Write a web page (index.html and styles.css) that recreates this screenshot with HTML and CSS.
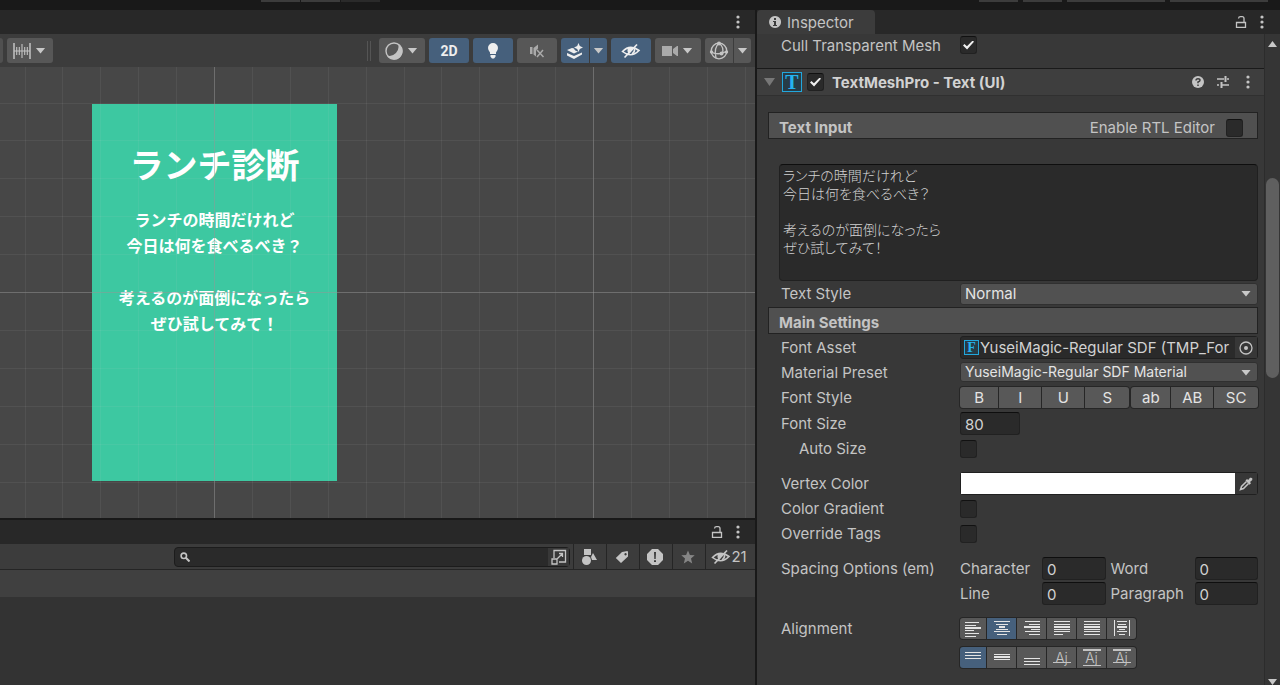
FILE: index.html
```html
<!DOCTYPE html>
<html lang="ja">
<head>
  <meta charset="UTF-8">
  <meta name="viewport" content="width=device-width, initial-scale=1.0">
  <title>Unity Editor</title>
  <link rel="stylesheet" href="styles.css">
</head>
<body>
  <!-- Shared icons -->
  <svg class="icon-defs" aria-hidden="true">
    <symbol id="icon-dots" viewBox="0 0 4 14">
      <circle cx="2" cy="2" r="1.6"/><circle cx="2" cy="7" r="1.6"/><circle cx="2" cy="12" r="1.6"/>
    </symbol>
    <symbol id="icon-lock" viewBox="0 0 12 14">
      <path d="M1.5 7.5h9v4.8h-9zM9 7V3.5Q9 1.700 7.200 1.700H5.500Q3.700 1.700 3.500 3.500" fill="none" stroke="currentColor" stroke-width="1.3"/>
    </symbol>
    <symbol id="icon-hidden" viewBox="0 0 20 16">
      <path d="M1.500 8.500Q9 .8 18 7.500Q10 15.500 1.500 8.500z" fill="none" stroke="currentColor" stroke-width="1.600"/>
      <path d="M7 5Q5.500 8.500 8 11l5-6Q10 3.500 7 5z"/>
      <path d="M13.500 6Q14 9 11 11" fill="none" stroke="currentColor" stroke-width="1.500"/>
      <path d="M3.500 14.500 16 1.500" stroke="currentColor" stroke-width="1.700"/>
    </symbol>
  </svg>

  <header class="app-bar">
    <div class="app-group">
      <span class="app-piece"></span><span class="app-piece"></span><span class="app-piece dim"></span>
    </div>
    <div class="app-group right">
      <span class="app-piece"></span><span class="app-piece"></span><span class="app-piece wide"></span><span class="app-piece wide"></span>
    </div>
  </header>

  <div class="workspace">
    <main class="left-column">
      <section class="scene-panel">
        <div class="tab-bar">
          <button class="icon-button" aria-label="Scene menu"><svg class="dots"><use href="#icon-dots"/></svg></button>
        </div>
        <div class="scene-toolbar">
          <span class="tool-stub"></span>
          <button class="tool snap" aria-label="Grid snapping">
            <svg width="18" height="18" viewBox="0 0 18 18" fill="none" stroke="currentColor"><path d="M1 1v16M17 1v16" stroke-width="1.500"/><path d="M1 9h16M3.700 5v8M6.300 5v8M9 2v14M11.700 5v8M14.300 5v8" stroke-width="1.100"/></svg>
            <span class="arrow"></span>
          </button>
          <span class="handle"></span>
          <button class="tool shading" aria-label="Draw mode">
            <svg width="18" height="18" viewBox="0 0 18 18"><circle cx="9" cy="9" r="8" fill="none" stroke="currentColor" stroke-width="1.400"/><path d="M13 2A9 9 0 0 1 2 13.500A8.300 8.300 0 1 0 13 2z"/></svg>
            <span class="arrow"></span>
          </button>
          <button class="tool on two-d">2D</button>
          <button class="tool on" aria-label="Lighting">
            <svg width="12" height="18" viewBox="0 0 12 18"><path d="M6 1a5 5 0 0 1 5 5q0 2.200-2 4.500V12H3v-1.500Q1 8.200 1 6a5 5 0 0 1 5-5zM3.500 13h5v1.700L7 16.500H5l-1.500-1.800z"/></svg>
          </button>
          <button class="tool muted" aria-label="Audio">
            <svg width="16" height="14" viewBox="0 0 16 14"><path d="M1 3h2.500v7H1zM4.500 4 9 .5v4L7 6.500v6l-2.500-2z"/><path d="M8 6l6.500 7M14 6l-6 7" fill="none" stroke="currentColor" stroke-width="1.500"/></svg>
          </button>
          <div class="tool-pair">
            <button class="tool on effects" aria-label="Effects">
              <svg width="18" height="18" viewBox="0 0 18 18"><path d="M1 8l5-2 2 .6Q8.500 9 12 9.500L8 11.500zM1 11l7 3 8-3.500v2L8 17l-7-3.500z"/><path d="M12.500 1l1.300 3 3.200 1.500-3.200 1.400-1.300 3-1.300-3L8 5.500 11.200 4z"/></svg>
            </button>
            <button class="tool on slim" aria-label="Effects options"><span class="arrow"></span></button>
          </div>
          <button class="tool on" aria-label="Scene visibility"><svg width="20" height="16"><use href="#icon-hidden"/></svg></button>
          <button class="tool camera muted" aria-label="Camera">
            <svg width="16" height="12" viewBox="0 0 16 12"><path d="M0 1h10v10H0zM11 4l4-3h1v10h-1l-4-3z"/></svg>
            <span class="arrow"></span>
          </button>
          <div class="tool-pair">
            <button class="tool gizmo" aria-label="Gizmos">
              <svg width="20" height="20" viewBox="0 0 20 20" fill="none" stroke="currentColor" stroke-width="1.300"><circle cx="10" cy="10" r="7.800"/><path d="M10 2Q4.500 7 7 17M10 2q6 5 3 11M2 11q8 4 16-1"/><g fill="currentColor" stroke="none"><circle cx="10" cy="2.500" r="2"/><circle cx="2.500" cy="11" r="1.700"/><circle cx="17.500" cy="11" r="1.700"/><circle cx="12.500" cy="12.500" r="2"/></g></svg>
            </button>
            <button class="tool slim" aria-label="Gizmo options"><span class="arrow"></span></button>
          </div>
        </div>

        <div class="scene-view">
          <div class="canvas-card">
            <h1 class="card-title">ランチ診断</h1>
            <p class="card-text">ランチの時間だけれど<br>今日は何を食べるべき？<br><br>考えるのが面倒になったら<br>ぜひ試してみて！</p>
          </div>
          <svg class="scene-grid" aria-hidden="true">
            <pattern id="grid" x="214" y="225" width="379" height="379" patternUnits="userSpaceOnUse">
              <path class="minor" d="M38 0v379M76 0v379M114 0v379M152 0v379M190 0v379M227 0v379M265 0v379M303 0v379M341 0v379M0 38h379M0 76h379M0 114h379M0 152h379M0 190h379M0 227h379M0 265h379M0 303h379M0 341h379" transform="translate(.5 .5)"/>
              <path class="major" d="M.5 0v379M0 .5h379"/>
            </pattern>
            <rect width="100%" height="100%" fill="url(#grid)"/>
          </svg>
        </div>
      </section>

      <section class="project-panel">
        <div class="tab-bar">
          <button class="icon-button" aria-label="Lock project"><svg class="lock"><use href="#icon-lock"/></svg></button>
          <button class="icon-button" aria-label="Project menu"><svg class="dots"><use href="#icon-dots"/></svg></button>
        </div>
        <div class="project-toolbar">
          <div class="search-box">
            <svg width="10" height="10" viewBox="0 0 10 10" fill="none" stroke="currentColor" stroke-width="1.600"><circle cx="3.800" cy="3.800" r="2.700"/><path d="M5.800 5.800 9.500 9.500" stroke-width="2"/></svg>
            <input class="search-input" type="text" aria-label="Search assets">
            <button class="search-open" aria-label="Open in search">
              <svg width="16" height="16" viewBox="0 0 16 16" fill="none" stroke="currentColor" stroke-width="1.300"><path d="M3 9V1.500h11.500V13H8M1 10h5v5H1zM6.500 9.500l5-5M8 4.500h3.500V8"/></svg>
            </button>
          </div>
          <button class="project-tool" aria-label="Search by type">
            <svg width="16" height="18" viewBox="0 0 16 18"><path d="M3 1h7v6H3zM12 5l4 7h-5l-1-3z"/><circle cx="5.500" cy="12.500" r="4.500"/></svg>
          </button>
          <button class="project-tool" aria-label="Search by label">
            <svg width="14" height="14" viewBox="0 0 14 14"><path fill-rule="evenodd" d="M7 2l5.500-1 .5 1v4.500L6 13 .8 8zM10.500 3a1.200 1.200 0 1 0 .1 0z"/></svg>
          </button>
          <button class="project-tool" aria-label="Search by log type">
            <svg width="18" height="18" viewBox="0 0 18 18"><path fill-rule="evenodd" d="M6 1h6l5 5v6l-5 5H6l-5-5V6zM8 4l.3 7h1.400L10 4zM8 12.200v1.800h2v-1.800z"/></svg>
          </button>
          <button class="project-tool faded" aria-label="Save search">
            <svg width="14" height="14" viewBox="0 0 14 14"><path d="M7 .5l1.900 4.400 4.800.4L10 8.500l1.200 4.900L7 10.800l-4.200 2.600L4 8.500.3 5.300l4.800-.4z"/></svg>
          </button>
          <button class="project-tool hidden-count">
            <svg width="20" height="16"><use href="#icon-hidden"/></svg>21
          </button>
        </div>
        <div class="project-path"></div>
      </section>
    </main>

    <aside class="inspector">
      <div class="tab-bar">
        <h2 class="tab">
          <svg width="12" height="12" viewBox="0 0 12 12"><path fill-rule="evenodd" d="M6 0a6 6 0 1 0 .1 0zM5 2v2h2V2zM4 5v1h1v3H4v1h4V9H7V5z"/></svg>
          Inspector
        </h2>
        <button class="icon-button" aria-label="Lock inspector"><svg class="lock"><use href="#icon-lock"/></svg></button>
        <button class="icon-button" aria-label="Inspector menu"><svg class="dots"><use href="#icon-dots"/></svg></button>
      </div>

      <div class="inspector-body">
        <form class="inspector-content">
          <div class="row cull-row">
            <label for="cull">Cull Transparent Mesh</label>
            <input type="checkbox" id="cull" class="check" checked>
          </div>

          <div class="component-header">
            <span class="foldout"></span>
            <span class="type-icon">T</span>
            <input type="checkbox" id="component" class="check" checked>
            <label for="component" class="component-name">TextMeshPro - Text (UI)</label>
            <button type="button" class="icon-button" aria-label="Help">
              <svg width="12" height="12" viewBox="0 0 12 12"><circle cx="6" cy="6" r="6"/><path d="M4 4.500Q4 2.700 6 2.700t2 1.600Q8 5.500 6 6v1.300M6 8.500V10" fill="none" stroke="#3e3e3e" stroke-width="1.500"/></svg>
            </button>
            <button type="button" class="icon-button" aria-label="Presets">
              <svg width="12" height="12" viewBox="0 0 12 12" fill="none" stroke="currentColor"><path d="M0 3h7M10 3h2M0 9h2M5 9h7" stroke-width="1.400"/><path d="M8.500 0v6M4.500 6v6" stroke-width="2"/></svg>
            </button>
            <button type="button" class="icon-button" aria-label="Component menu"><svg class="dots"><use href="#icon-dots"/></svg></button>
          </div>

          <div class="section-bar first">
            <label for="text-input" class="section-name">Text Input</label>
            <label for="rtl">Enable RTL Editor</label>
            <input type="checkbox" id="rtl" class="check">
          </div>
          <textarea id="text-input" class="text-input" spellcheck="false">ランチの時間だけれど
今日は何を食べるべき？

考えるのが面倒になったら
ぜひ試してみて！</textarea>
          <div class="row">
            <label for="text-style">Text Style</label>
            <div class="select-wrap">
              <select id="text-style"><option>Normal</option></select>
              <span class="arrow"></span>
            </div>
          </div>

          <div class="section-bar">
            <h3 class="section-name">Main Settings</h3>
          </div>
          <div class="group font-group">
            <div class="row">
              <label for="font-asset">Font Asset</label>
              <div class="object-field">
                <span class="asset-icon">F</span>
                <input type="text" id="font-asset" value="YuseiMagic-Regular SDF (TMP_For" readonly>
                <button type="button" class="picker" aria-label="Select font asset">
                  <svg width="14" height="14" viewBox="0 0 14 14"><circle cx="7" cy="7" r="6" fill="none" stroke="currentColor" stroke-width="1.300"/><circle cx="7" cy="7" r="2"/></svg>
                </button>
              </div>
            </div>
            <div class="row">
              <label for="material">Material Preset</label>
              <div class="select-wrap small">
                <select id="material"><option>YuseiMagic-Regular SDF Material</option></select>
                <span class="arrow"></span>
              </div>
            </div>
            <div class="row">
              <span>Font Style</span>
              <div class="style-buttons">
                <div class="button-strip four">
                  <button type="button">B</button><button type="button">I</button><button type="button">U</button><button type="button">S</button>
                </div>
                <div class="button-strip three">
                  <button type="button">ab</button><button type="button">AB</button><button type="button">SC</button>
                </div>
              </div>
            </div>
          </div>
          <div class="group size-group">
            <div class="row">
              <label for="font-size">Font Size</label>
              <input type="text" id="font-size" class="field size-field" value="80">
            </div>
            <div class="row">
              <label for="auto-size" class="indent">Auto Size</label>
              <input type="checkbox" id="auto-size" class="check">
            </div>
          </div>
          <div class="group">
            <div class="row">
              <label for="vertex-color">Vertex Color</label>
              <div class="color-field">
                <input type="color" id="vertex-color" value="#ffffff">
                <button type="button" class="picker" aria-label="Pick color">
                  <svg width="14" height="14" viewBox="0 0 14 14"><path d="M6.500 3.500 8 2l1.200 1L11 .8Q14 0 13.300 3L11 5l1 1.200-1.500 1.500z"/><path d="M7.500 4.500 2.500 9.500 1.500 12.500l3-1 5-5" fill="none" stroke="currentColor" stroke-width="1.500"/></svg>
                </button>
              </div>
            </div>
            <div class="row">
              <label for="gradient">Color Gradient</label>
              <input type="checkbox" id="gradient" class="check">
            </div>
            <div class="row">
              <label for="override">Override Tags</label>
              <input type="checkbox" id="override" class="check">
            </div>
          </div>
          <div class="group">
            <div class="row">
              <span>Spacing Options (em)</span>
              <div class="spacing-fields">
                <label for="character">Character</label><input type="text" id="character" class="field" value="0">
                <label for="word">Word</label><input type="text" id="word" class="field" value="0">
              </div>
            </div>
            <div class="row">
              <span></span>
              <div class="spacing-fields">
                <label for="line">Line</label><input type="text" id="line" class="field" value="0">
                <label for="paragraph">Paragraph</label><input type="text" id="paragraph" class="field" value="0">
              </div>
            </div>
          </div>
          <div class="group align-group">
            <div class="row">
              <span>Alignment</span>
              <div class="button-strip align">
                <button type="button" aria-label="Left"><svg class="align-icon"><path d="M0 2.500h14M0 5.500h11M0 10.500h9M0 13.500h14M0 16.500h11"/><path class="thick" d="M0 8h16"/></svg></button>
                <button type="button" class="on" aria-label="Center"><svg class="align-icon"><path d="M0 1.500h16M2 4.500h12M2 9.500h12M0 11.500h16M3 14.500h10"/><path class="thick" d="M5 7h6"/></svg></button>
                <button type="button" aria-label="Right"><svg class="align-icon"><path d="M1 1.500h15M5 4.500h11M7 9.500h9M1 11.500h15M5 14.500h11"/><path class="thick" d="M0 7h16"/></svg></button>
                <button type="button" aria-label="Justified"><svg class="align-icon"><path d="M0 1.500h16M0 4.500h16M0 9.500h16M0 11.500h16M0 14.500h9"/><path class="thick" d="M0 7h16"/></svg></button>
                <button type="button" aria-label="Flush"><svg class="align-icon"><path d="M0 1.500h16M0 4.500h16M0 9.500h16M0 11.500h16M0 14.500h16"/><path class="thick" d="M0 7h16"/></svg></button>
                <button type="button" aria-label="Geometry center"><svg class="align-icon"><path d="M.5 0v16M15.500 0v16M3 1.500h10M4 4.500h8M5 9.500h6M3 11.500h10M5 14.500h6"/><path class="thick" d="M3 7h10"/></svg></button>
              </div>
            </div>
            <div class="row">
              <span></span>
              <div class="button-strip align">
                <button type="button" class="on" aria-label="Top"><svg class="align-icon"><path d="M0 3.500h16M0 6.500h16M0 9.500h16"/></svg></button>
                <button type="button" aria-label="Middle"><svg class="align-icon"><path d="M0 5.500h16M0 10.500h16"/><path class="thick" d="M0 8h16"/></svg></button>
                <button type="button" aria-label="Bottom"><svg class="align-icon"><path d="M0 9.500h16M0 12.500h16M0 15.500h16"/></svg></button>
                <button type="button" class="glyph baseline" aria-label="Baseline">Aj</button>
                <button type="button" class="glyph midline" aria-label="Midline">Aj</button>
                <button type="button" class="glyph capline" aria-label="Capline">Aj</button>
              </div>
            </div>
          </div>
        </form>
        <div class="scrollbar">
          <span class="scroll-up"></span>
          <span class="scroll-track"><span class="scroll-thumb"></span></span>
          <span class="scroll-down"></span>
        </div>
      </div>
    </aside>
  </div>
</body>
</html>
```
FILE: styles.css
```css
* {
  box-sizing: border-box;
}

body {
  margin: 0;
  height: 100vh;
  overflow: hidden;
  display: flex;
  flex-direction: column;
  background: #191919;
  color: #c4c4c4;
  font-family: Inter, 'Noto Sans CJK JP', sans-serif;
  font-size: 15px;
}

button, input, select, textarea {
  margin: 0;
  padding: 0;
  border: 0;
  background: none;
  color: inherit;
  font: inherit;
}

h1, h2, h3, p {
  margin: 0;
  font: inherit;
}

svg {
  display: block;
  flex-shrink: 0;
}

svg:not([fill]) {
  fill: currentColor;
}

.icon-defs {
  position: absolute;
  width: 0;
  height: 0;
}

/* Top strip */
.app-bar {
  height: 10px;
  flex-shrink: 0;
  display: flex;
  justify-content: space-between;
  padding: 0 12px 0 261px;
}

.app-group {
  display: flex;
  gap: 1px;
}

.app-group.right {
  gap: 5px;
}

.app-piece {
  width: 39px;
  height: 2px;
  background: #3c3c3c;
}

.app-piece.dim {
  background: #2a2a2a;
}

.app-piece.wide {
  width: 98px;
}

.workspace {
  flex: 1;
  min-height: 0;
  display: grid;
  grid-template-columns: minmax(0, 1fr) 523px;
  gap: 2px;
}

.left-column {
  display: grid;
  grid-template-rows: minmax(0, 1fr) 165px;
  gap: 2px;
}

.tab-bar {
  height: 24px;
  flex-shrink: 0;
  display: flex;
  align-items: center;
  justify-content: flex-end;
  gap: 9px;
  padding-right: 12px;
  background: #282828;
}

.left-column .tab-bar {
  padding-right: 11px;
}

.icon-button {
  display: flex;
  align-items: center;
  justify-content: center;
  min-width: 12px;
}

.dots {
  width: 4px;
  height: 14px;
}

.lock {
  width: 12px;
  height: 14px;
}

.arrow {
  width: 10px;
  height: 6px;
  flex-shrink: 0;
  background: #c8c8c8;
  clip-path: polygon(0 0, 100% 0, 50% 100%);
}

/* Scene */
.scene-panel {
  display: flex;
  flex-direction: column;
  min-height: 0;
}

.scene-toolbar {
  height: 33px;
  flex-shrink: 0;
  display: flex;
  align-items: center;
  gap: 4px;
  padding-right: 4px;
  background: #3c3c3c;
}

.tool-stub {
  width: 3px;
  height: 25px;
  border-radius: 0 3px 3px 0;
  background: #505050;
}

.tool {
  width: 40px;
  height: 25px;
  display: flex;
  align-items: center;
  justify-content: center;
  border-radius: 3px;
  background: #575757;
}

.tool.on {
  background: #46607c;
  color: #eeeeee;
}

.tool.muted {
  color: #aaaaaa;
}

.snap, .shading, .camera {
  width: 46px;
  gap: 5px;
  padding-right: 2px;
}

.two-d {
  font-family: Roboto, sans-serif;
  font-size: 14px;
  font-weight: 700;
}

.handle {
  width: 4px;
  height: 20px;
  margin-left: auto;
  margin-right: 4px;
  border: 1px solid #555555;
  border-width: 0 1px;
}

.tool-pair {
  display: flex;
  gap: 1px;
}

.tool-pair .tool {
  width: 28px;
  border-radius: 3px 0 0 3px;
}

.tool-pair .slim {
  width: 17px;
  border-radius: 0 3px 3px 0;
}

.scene-view {
  flex: 1;
  position: relative;
  overflow: hidden;
  background: #474747;
}

.scene-grid {
  position: absolute;
  inset: 0;
  width: 100%;
  height: 100%;
}

.minor {
  fill: none;
  stroke: rgba(200, 200, 200, 0.08);
}

.major {
  fill: none;
  stroke: rgba(150, 150, 150, 0.5);
}

.canvas-card {
  position: absolute;
  left: 92px;
  top: 37px;
  width: 245px;
  height: 377px;
  padding-top: 38px;
  background: #3dc8a1;
  color: #ffffff;
  text-align: center;
  font-family: 'Noto Sans CJK JP', sans-serif;
  font-weight: 700;
}

.card-title {
  font-size: 34px;
  font-weight: 700;
  line-height: 44px;
}

.card-text {
  margin-top: 20px;
  font-size: 16px;
  font-weight: 700;
  line-height: 26px;
}

/* Project */
.project-panel {
  display: flex;
  flex-direction: column;
  background: #333333;
}

.project-toolbar {
  height: 26px;
  display: flex;
  padding-left: 174px;
  background: #3c3c3c;
  border-bottom: 1px solid #252525;
}

.search-box {
  flex: 1;
  height: 20px;
  margin: 3px 3px 0 0;
  display: flex;
  align-items: center;
  padding-left: 5px;
  border: 1px solid #1c1c1c;
  border-radius: 4px;
  background: #2a2a2a;
}

.search-input {
  flex: 1;
  min-width: 0;
  height: 18px;
  padding: 0 4px;
  outline: 0;
}

.search-open {
  width: 21px;
  height: 18px;
  display: flex;
  align-items: center;
  justify-content: center;
  background: #383838;
}

.project-tool {
  width: 33px;
  padding-right: 3px;
  display: flex;
  align-items: center;
  justify-content: center;
  border-left: 1px solid #252525;
}

.project-tool.faded {
  color: #858585;
}

.hidden-count {
  width: 50px;
}

.project-path {
  height: 27px;
  background: #404040;
}

/* Inspector */
.inspector {
  display: flex;
  flex-direction: column;
  min-height: 0;
  background: #383838;
}

.tab {
  height: 24px;
  margin-right: auto;
  padding: 0 21px 0 12px;
  display: flex;
  align-items: center;
  gap: 6px;
  border-radius: 4px 4px 0 0;
  background: #3c3c3c;
}

.inspector-body {
  flex: 1;
  min-height: 0;
  display: flex;
}

.inspector-content {
  flex: 1;
  min-width: 0;
  overflow: hidden;
}

.row {
  height: 25px;
  display: grid;
  grid-template-columns: 179px minmax(0, 1fr);
  align-items: center;
  padding: 0 6px 0 24px;
}

.indent {
  padding-left: 18px;
}

.cull-row {
  height: 34px;
  padding-bottom: 12px;
}

.check {
  appearance: none;
  width: 17px;
  height: 18px;
  display: flex;
  align-items: center;
  justify-content: center;
  border: 1px solid #212121;
  border-top-color: #111111;
  border-radius: 3px;
  background: #2a2a2a;
}

.check:checked::after {
  content: '';
  width: 11px;
  height: 9px;
  background: #eeeeee;
  clip-path: polygon(0 55%, 13% 40%, 36% 64%, 88% 0, 100% 14%, 37% 100%);
}

.component-header {
  height: 28px;
  display: flex;
  align-items: center;
  padding: 0 10px 0 7px;
  background: #3e3e3e;
  border-top: 1px solid #1a1a1a;
  border-bottom: 1px solid #303030;
}

.foldout {
  width: 11px;
  height: 8px;
  margin-right: 7px;
  background: #777777;
  clip-path: polygon(0 0, 100% 0, 50% 100%);
}

.type-icon, .asset-icon {
  display: flex;
  align-items: center;
  justify-content: center;
  flex-shrink: 0;
  border: 1px solid #22a7dd;
  background: #263c47;
  color: #25b4f0;
  font-family: 'Liberation Serif', serif;
  font-weight: 700;
}

.type-icon {
  width: 20px;
  height: 20px;
  margin-right: 5px;
  font-size: 20px;
}

.component-name {
  flex: 1;
  padding-left: 8px;
  color: #d2d2d2;
  font-weight: 700;
}

.component-header .icon-button {
  width: 13px;
  margin-left: 12px;
}

.section-bar {
  height: 27px;
  display: flex;
  align-items: center;
  gap: 11px;
  margin: 1px 6px 0 11px;
  padding: 4px 14px 0 10px;
  border: 1px solid #222222;
  background: #505050;
}

.section-bar.first {
  margin-top: 16px;
}

.section-name {
  margin-right: auto;
  font-weight: 700;
}

.text-input {
  display: block;
  width: calc(100% - 28px);
  height: 117px;
  margin: 25px 6px 0 22px;
  padding: 1px 3px;
  border: 1px solid #202020;
  border-top-color: #0e0e0e;
  border-radius: 4px;
  outline: 0;
  resize: none;
  background: #2a2a2a;
  color: #d2d2d2;
  font-family: 'Noto Sans CJK JP', sans-serif;
  font-size: 14px;
  font-weight: 300;
  font-feature-settings: 'palt';
  line-height: 18px;
}

.group {
  margin-top: 10px;
}

.font-group {
  margin-top: 1px;
}

.size-group {
  margin-top: 1px;
}

.align-group {
  display: grid;
  gap: 4px;
}

.select-wrap {
  position: relative;
  height: 22px;
}

.select-wrap select {
  appearance: none;
  width: 100%;
  height: 22px;
  padding-left: 4px;
  border: 1px solid #303030;
  border-radius: 3px;
  background: #515151;
  color: #e4e4e4;
}

.select-wrap.small select {
  height: 20px;
  font-size: 14px;
}

.select-wrap .arrow {
  position: absolute;
  right: 7px;
  top: 8px;
  pointer-events: none;
}

.object-field, .color-field {
  height: 23px;
  display: flex;
  align-items: center;
  border: 1px solid #202020;
  border-radius: 3px;
  background: #2a2a2a;
}

.asset-icon {
  width: 15px;
  height: 15px;
  margin-left: 3px;
  font-size: 14px;
}

.object-field input {
  flex: 1;
  min-width: 0;
  padding-left: 1px;
  outline: 0;
  color: #d2d2d2;
}

.picker {
  width: 22px;
  height: 21px;
  display: flex;
  align-items: center;
  justify-content: center;
  background: #373737;
}

.color-field input {
  flex: 1;
  height: 21px;
}

.color-field input::-webkit-color-swatch-wrapper {
  padding: 0;
}

.color-field input::-webkit-color-swatch {
  border: 0;
}

.style-buttons {
  display: grid;
  grid-template-columns: 170fr 127fr;
  gap: 2px;
}

.button-strip {
  display: grid;
  gap: 1px;
  height: 21px;
}

.button-strip.four {
  grid-template-columns: 38fr 42fr 42fr 44fr;
}

.button-strip.three {
  grid-template-columns: 39fr 42fr 44fr;
}

.button-strip.align {
  grid-template-columns: 26px repeat(5, 29px);
}

.button-strip button {
  display: flex;
  align-items: center;
  justify-content: center;
  background-color: #585858;
  color: #e4e4e4;
  box-shadow: 0 0 0 1px #262626;
}

.button-strip button:first-child {
  border-radius: 3px 0 0 3px;
}

.button-strip button:last-child {
  border-radius: 0 3px 3px 0;
}

.button-strip .on {
  background-color: #46607c;
}

.button-strip .align-icon {
  width: 16px;
  height: 18px;
  fill: none;
  stroke: #e4e4e4;
  stroke-width: 1;
}

.align-icon .thick {
  stroke-width: 2;
}

.button-strip .glyph {
  color: #c4c4c4;
  font-size: 14px;
  font-weight: 300;
  background-image: linear-gradient(#c4c4c4, #c4c4c4), linear-gradient(#c4c4c4, #c4c4c4);
  background-repeat: no-repeat;
}

.button-strip .baseline {
  background-size: 18px 1px, 0 0;
  background-position: center 15px, 0 0;
}

.button-strip .midline {
  background-size: 18px 2px, 18px 1px;
  background-position: center 2px, center 18px;
}

.button-strip .capline {
  background-size: 18px 2px, 18px 1px;
  background-position: center 2px, center 15px;
}

.field {
  min-width: 0;
  height: 23px;
  padding: 1px 4px 0;
  border: 1px solid #212121;
  border-top-color: #0e0e0e;
  border-radius: 3px;
  outline: 0;
  background: #2a2a2a;
  color: #d2d2d2;
}

.size-field {
  width: 60px;
}

.spacing-fields {
  display: grid;
  grid-template-columns: 77px 1fr 79px 1fr;
  column-gap: 5px;
  align-items: center;
}

/* Scrollbar */
.scrollbar {
  width: 16px;
  display: flex;
  flex-direction: column;
  align-items: center;
  padding-top: 7px;
  border-left: 1px solid #2c2c2c;
  background: #353535;
}

.scroll-up, .scroll-down {
  width: 9px;
  height: 6px;
  background: #c8c8c8;
}

.scroll-up {
  clip-path: polygon(50% 0, 100% 100%, 0 100%);
}

.scroll-down {
  clip-path: polygon(0 0, 100% 0, 50% 100%);
}

.scroll-track {
  flex: 1;
  padding-top: 131px;
}

.scroll-thumb {
  display: block;
  width: 13px;
  height: 200px;
  border-radius: 7px;
  background: #5f5f5f;
}
```
